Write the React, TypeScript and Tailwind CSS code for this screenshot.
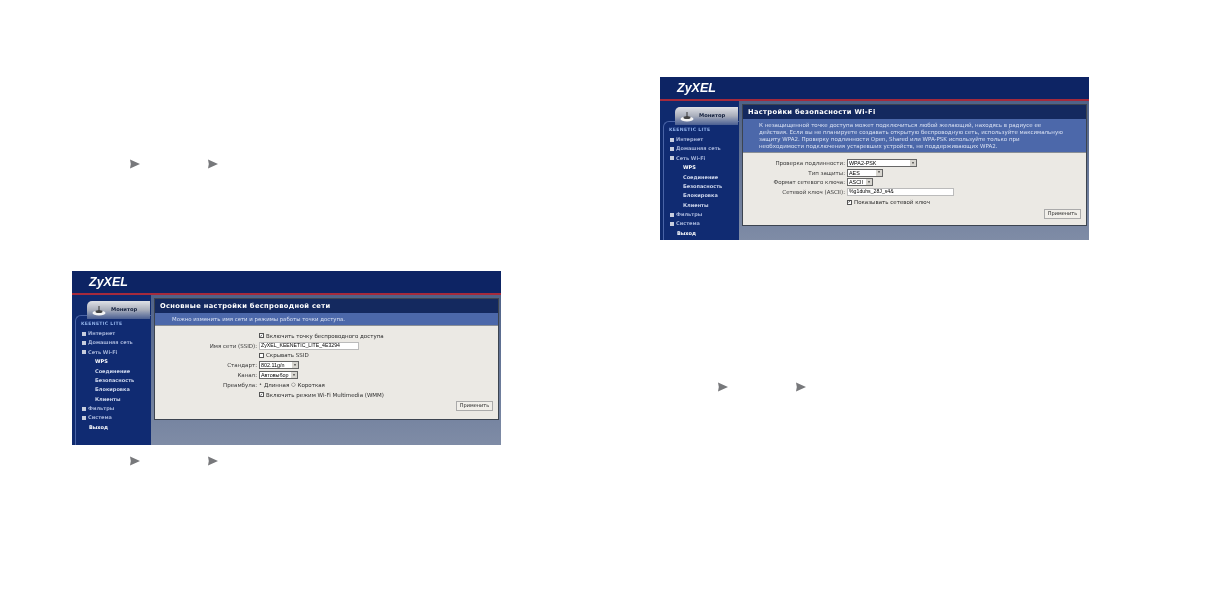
import type { ReactNode } from "react";

const sans = "font-['DejaVu_Sans',sans-serif]";

function Arrow() {
  return (
    <svg width="10" height="10" viewBox="0 0 10 10" className="shrink-0">
      <path d="M0 0.5 L10 5 L0 9.5 L0.8 5 Z" fill="#77787b" />
    </svg>
  );
}

function Crumbs({ className }: { className: string }) {
  return (
    <div className={`flex items-center gap-[68px] ${className}`}>
      <Arrow />
      <Arrow />
    </div>
  );
}

function Plus({ text }: { text: string }) {
  return (
    <div className="flex h-[9.4px] items-center gap-[2px] pl-[9px]">
      <span className="h-[4px] w-[4px] bg-[#c8cede]" />
      <span className="text-[#a3b2d8]">{text}</span>
    </div>
  );
}

function Sub({ text, white }: { text: string; white?: boolean }) {
  return (
    <div className={`flex h-[9.4px] items-center pl-[22px] ${white ? "text-white" : "text-[#cdd6ec]"}`}>
      {text}
    </div>
  );
}

function Sidebar() {
  return (
    <div className="relative w-[79px] shrink-0 bg-[#0f2a6e]">
      {/* monitor tab */}
      <div className="absolute left-[15px] top-[6px] flex h-[18px] w-[63px] items-center gap-[5px] rounded-tl-[5px] bg-gradient-to-b from-[#dfe1e6] via-[#a9aebb] to-[#4b5f92] pl-[5px]">
        <svg width="14" height="11" viewBox="0 0 14 11">
          <ellipse cx="7" cy="8" rx="6.5" ry="2.5" fill="#f4f4f4" />
          <rect x="6.5" y="1" width="1" height="6" fill="#333" />
          <ellipse cx="7" cy="6.5" rx="3.5" ry="1.5" fill="#444" />
        </svg>
        <span className={`${sans} text-[5.2px] font-bold text-[#14213f]`}>Монитор</span>
      </div>
      <div className={`${sans} mt-[20px] ml-[3px] h-[calc(100%-20px)] rounded-tl-[6px] border-t border-l border-[#4a64a6] bg-[#102b72] pt-[4px] text-[5px] font-bold`}>
        <div className="-ml-[3px]">
          <div className="flex h-[9px] items-center pl-[8px] text-[4.6px] tracking-[0.3px] text-[#8fb0e8]">KEENETIC LITE</div>
          <Plus text="Интернет" />
          <Plus text="Домашняя сеть" />
          <Plus text="Сеть Wi-Fi" />
          <Sub text="WPS" white />
          <Sub text="Соединение" />
          <Sub text="Безопасность" />
          <Sub text="Блокировка" />
          <Sub text="Клиенты" />
          <Plus text="Фильтры" />
          <Plus text="Система" />
          <div className="flex h-[9.4px] items-center pl-[16px] text-white">Выход</div>
        </div>
      </div>
    </div>
  );
}

function Frame({
  title,
  desc,
  height,
  bandH,
  padBottom,
  children,
}: {
  title: string;
  desc: ReactNode;
  height: string;
  bandH: string;
  padBottom: string;
  children: ReactNode;
}) {
  return (
    <div className={`flex w-[429px] flex-col overflow-hidden blur-[0.45px] ${height}`}>
      <div className="flex h-[22px] shrink-0 items-center bg-[#0d2464] pl-[17px] font-['Liberation_Sans',sans-serif] text-[12.5px] font-bold italic text-white">
        ZyXEL
      </div>
      <div className="h-[2px] shrink-0 bg-[#a52a3c]" />
      <div className="flex min-h-0 flex-1">
        <Sidebar />
        <div className={`flex min-w-0 flex-1 flex-col bg-gradient-to-b from-[#4f6288] to-[#7f8ca6] pt-[3px] pl-[3px] pr-[2px] ${padBottom}`}>
          <div className="flex flex-1 flex-col border border-[#3c4450] bg-[#ebe9e4]">
            <div className={`${sans} flex h-[14px] shrink-0 items-center bg-[#14295f] pl-[5px] text-[6.7px] font-bold tracking-[0.35px] text-white`}>
              {title}
            </div>
            <div className={`${sans} shrink-0 border-b border-[#8a8f96] bg-[#4c68aa] text-[#d8e0f2] ${bandH}`}>{desc}</div>
            <div className="flex flex-1 flex-col">{children}</div>
          </div>
        </div>
      </div>
    </div>
  );
}

function Row({ label, labelW, children }: { label?: string; labelW: string; children: ReactNode }) {
  return (
    <div className={`${sans} flex h-[9.8px] items-center text-[5.5px] text-[#2c2c2c]`}>
      <div className={`shrink-0 whitespace-nowrap pr-[2px] text-right text-[#3a3a3a] ${labelW}`}>{label}</div>
      {children}
    </div>
  );
}

function Check({ on }: { on?: boolean }) {
  return (
    <span className="mr-[2px] flex h-[5px] w-[5px] shrink-0 items-center justify-center border border-[#555] bg-white text-[4px] font-bold leading-none text-black">
      {on ? "✓" : ""}
    </span>
  );
}

function Select({ text, w }: { text: string; w: string }) {
  return (
    <div className={`flex h-[8px] items-center justify-between border border-[#666] bg-white pl-[1px] font-['Liberation_Sans',sans-serif] text-[5.4px] text-black ${w}`}>
      {text}
      <span className="flex h-full w-[6px] items-center justify-center bg-[#d8d6d0] text-[3px]">▼</span>
    </div>
  );
}

function Input({ text, w }: { text: string; w: string }) {
  return (
    <div className={`flex h-[8px] items-center border border-[#bbb] bg-white pl-[1px] font-['Liberation_Sans',sans-serif] text-[5.2px] text-black ${w}`}>
      {text}
    </div>
  );
}

function ApplyButton() {
  return (
    <div className="flex justify-end pr-[5px]">
      <div className={`${sans} flex h-[10px] w-[37px] items-center justify-center border border-[#aaa] bg-[#f1efea] text-[5px] text-[#222]`}>
        Применить
      </div>
    </div>
  );
}

export default function App() {
  return (
    <div className="flex h-[602px] w-[1205px] overflow-hidden bg-white">
      <div className="flex w-[660px] shrink-0 flex-col pl-[72px]">
        <Crumbs className="mt-[159px] ml-[58px]" />
        <div className="mt-[102px]">
          <Frame
            title="Основные настройки беспроводной сети"
            height="h-[174px]"
            bandH="flex h-[13px] items-center pl-[17px] text-[5.4px]"
            padBottom="pb-[25px]"
            desc="Можно изменить имя сети и режимы работы точки доступа."
          >
            <div className="pt-[5px]">
              <Row labelW="w-[104px]">
                <Check on />
                Включить точку беспроводного доступа
              </Row>
              <Row label="Имя сети (SSID):" labelW="w-[104px]">
                <Input text="ZyXEL_KEENETIC_LITE_4E3294" w="w-[100px]" />
              </Row>
              <Row labelW="w-[104px]">
                <Check />
                Скрывать SSID
              </Row>
              <Row label="Стандарт:" labelW="w-[104px]">
                <Select text="802.11g/n" w="w-[40px]" />
              </Row>
              <Row label="Канал:" labelW="w-[104px]">
                <Select text="Автовыбор" w="w-[39px]" />
              </Row>
              <Row label="Преамбула:" labelW="w-[104px]">
                <span className="mr-[2px] text-[5px]">•</span>Длинная
                <span className="mx-[2px] text-[5px]">○</span>Короткая
              </Row>
              <Row labelW="w-[104px]">
                <Check on />
                Включить режим Wi-Fi Multimedia (WMM)
              </Row>
              <div className="mt-[1px]">
                <ApplyButton />
              </div>
            </div>
          </Frame>
        </div>
        <Crumbs className="mt-[11px] ml-[58px]" />
      </div>

      <div className="flex flex-1 flex-col">
        <div className="mt-[77px]">
          <Frame
            title="Настройки безопасности Wi-Fi"
            height="h-[163px]"
            bandH="h-[34px] px-[16px] pt-[3px] text-[5.5px] leading-[7px]"
            padBottom="pb-[14px]"
            desc={
              <>
                <div className="whitespace-nowrap">К незащищенной точке доступа может подключиться любой желающий, находясь в радиусе ее</div>
                <div className="whitespace-nowrap">действия. Если вы не планируете создавать открытую беспроводную сеть, используйте максимальную</div>
                <div className="whitespace-nowrap">защиту WPA2. Проверку подлинности Open, Shared или WPA-PSK используйте только при</div>
                <div className="whitespace-nowrap">необходимости подключения устаревших устройств, не поддерживающих WPA2.</div>
              </>
            }
          >
            <div className="pt-[5px]">
              <Row label="Проверка подлинности:" labelW="w-[104px]">
                <Select text="WPA2-PSK" w="w-[70px]" />
              </Row>
              <Row label="Тип защиты:" labelW="w-[104px]">
                <Select text="AES" w="w-[36px]" />
              </Row>
              <Row label="Формат сетевого ключа:" labelW="w-[104px]">
                <Select text="ASCII" w="w-[26px]" />
              </Row>
              <Row label="Сетевой ключ (ASCII):" labelW="w-[104px]">
                <Input text="%g1duhs_28J_s4&" w="w-[107px]" />
              </Row>
              <Row labelW="w-[104px]">
                <Check on />
                Показывать сетевой ключ
              </Row>
              <div className="mt-[2px]">
                <ApplyButton />
              </div>
            </div>
          </Frame>
        </div>
        <Crumbs className="mt-[142px] ml-[58px]" />
      </div>
    </div>
  );
}
